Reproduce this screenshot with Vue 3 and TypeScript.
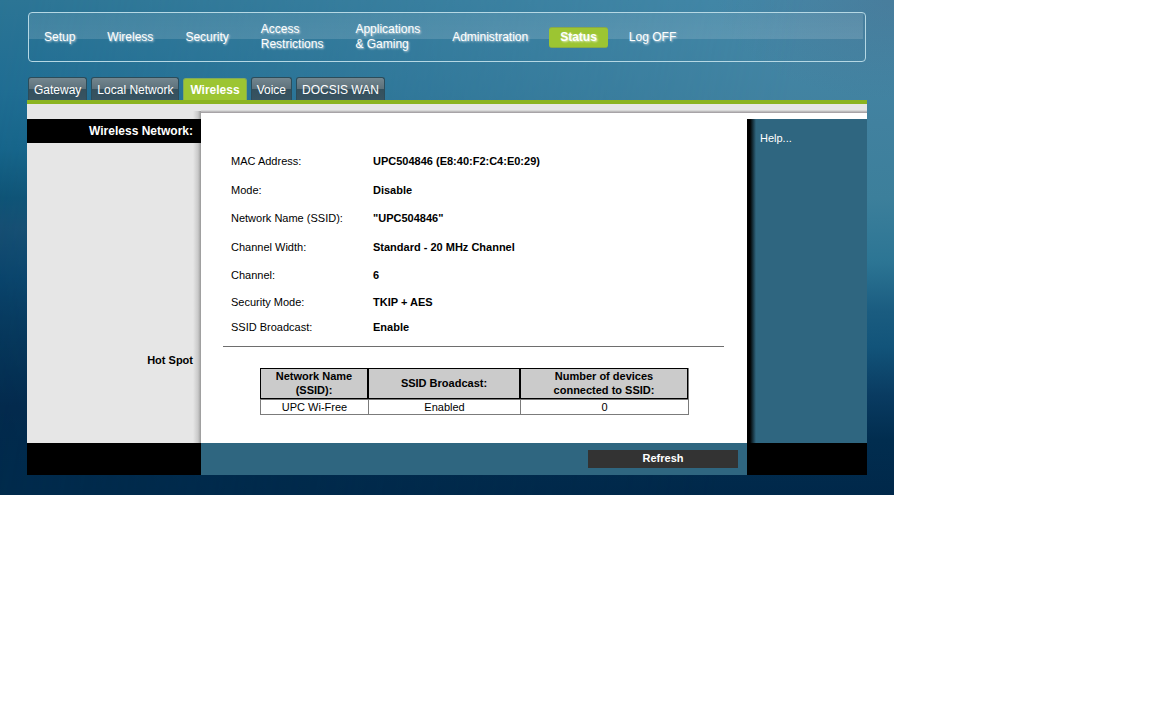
<script setup lang="ts">
import { ref } from 'vue'

interface Field {
  label: string
  value: string
  compact?: boolean
}

interface HotSpot {
  name: string
  broadcast: string
  devices: number
}

const menu: string[][] = [
  ['Setup'],
  ['Wireless'],
  ['Security'],
  ['Access', 'Restrictions'],
  ['Applications', '& Gaming'],
  ['Administration'],
  ['Status'],
  ['Log OFF'],
]
const activeMenu = ref('Status')

const tabs: string[] = ['Gateway', 'Local Network', 'Wireless', 'Voice', 'DOCSIS WAN']
const activeTab = ref('Wireless')

const fields: Field[] = [
  { label: 'MAC Address:', value: 'UPC504846 (E8:40:F2:C4:E0:29)' },
  { label: 'Mode:', value: 'Disable' },
  { label: 'Network Name (SSID):', value: '"UPC504846"' },
  { label: 'Channel Width:', value: 'Standard - 20 MHz Channel' },
  { label: 'Channel:', value: '6' },
  { label: 'Security Mode:', value: 'TKIP + AES', compact: true },
  { label: 'SSID Broadcast:', value: 'Enable', compact: true },
]

const hotSpots: HotSpot[] = [{ name: 'UPC Wi-Free', broadcast: 'Enabled', devices: 0 }]
</script>

<template>
  <div class="shell">
    <nav class="menu" aria-label="Main">
      <a
        v-for="lines in menu"
        :key="lines[0]"
        href="#"
        class="menu-item"
        :class="{ active: lines[0] === activeMenu }"
        @click.prevent="activeMenu = lines[0]"
      >
        <span v-for="line in lines" :key="line">{{ line }}</span>
      </a>
    </nav>

    <nav class="tabs" aria-label="Status pages">
      <a
        v-for="tab in tabs"
        :key="tab"
        href="#"
        class="tab"
        :class="{ active: tab === activeTab }"
        @click.prevent="activeTab = tab"
        >{{ tab }}</a
      >
    </nav>

    <div class="panel">
      <div class="strip-side"></div>
      <div class="strip-main"></div>

      <h2 class="side"><span class="side-title">Wireless Network:</span></h2>
      <main class="content">
        <dl class="fields">
          <div v-for="f in fields" :key="f.label" class="field" :class="{ compact: f.compact }">
            <dt>{{ f.label }}</dt>
            <dd>{{ f.value }}</dd>
          </div>
        </dl>
        <hr class="rule" />
      </main>

      <h2 class="side side-lower">Hot Spot</h2>
      <section class="content">
        <table class="spots">
          <colgroup>
            <col class="col-name" />
            <col class="col-broadcast" />
            <col class="col-devices" />
          </colgroup>
          <thead>
            <tr>
              <th scope="col">Network Name<br />(SSID):</th>
              <th scope="col">SSID Broadcast:</th>
              <th scope="col">Number of devices<br />connected to SSID:</th>
            </tr>
          </thead>
          <tbody>
            <tr v-for="s in hotSpots" :key="s.name">
              <td>{{ s.name }}</td>
              <td>{{ s.broadcast }}</td>
              <td>{{ s.devices }}</td>
            </tr>
          </tbody>
        </table>
      </section>

      <aside class="help"><a href="#">Help...</a></aside>

      <div class="foot-dark"></div>
      <footer class="foot">
        <button type="button" class="refresh">Refresh</button>
      </footer>
      <div class="foot-dark"></div>
    </div>
  </div>
</template>

<style>
body {
  background: #fff;
}
</style>

<style scoped>
.shell {
  position: relative;
  isolation: isolate;
  box-sizing: border-box;
  max-width: 894px;
  padding: 12px 27px 20px;
  font-family: 'Liberation Sans', Arial, sans-serif;
  font-size: 11px;
  color: #000;
  background: linear-gradient(
    #2c7595 0%,
    #1f6d93 18%,
    #15648a 30%,
    #0c5275 40%,
    #144c71 46%,
    #08426a 56%,
    #053559 68%,
    #03294c 82%,
    #002b4c 100%
  );
}

/* lighter sky towards the right edge */
.shell::before {
  content: '';
  position: absolute;
  inset: 0;
  z-index: -1;
  background:
    radial-gradient(ellipse 20% 20% at 100% 0, rgba(80, 105, 135, 0.35), transparent),
    linear-gradient(
      #4488a8 0%,
      #41819f 25%,
      #3c7f9b 40%,
      #2c7594 53%,
      #1a5c80 63%,
      #12547a 70%,
      #093b61 80%,
      #012d4f 89%,
      #00284a 100%
    );
  mask-image: linear-gradient(100deg, transparent 0%, #000 82%);
}

.menu {
  display: flex;
  align-items: center;
  gap: 32px;
  box-sizing: border-box;
  min-height: 50px;
  margin: 0 1px;
  padding: 0 15px;
  border: 1px solid #b5d8e4;
  border-radius: 4px;
  background: linear-gradient(
      to bottom,
      rgba(255, 255, 255, 0.1),
      rgba(255, 255, 255, 0.14)
    )
    no-repeat 0 0 / calc(100% - 2px) 26px;
}

.menu-item {
  display: flex;
  flex-direction: column;
  font-size: 12px;
  line-height: 15px;
  white-space: nowrap;
  color: #fff;
  text-decoration: none;
  text-shadow: 1px 1px 2px rgba(255, 255, 255, 0.7);
}

.menu-item.active {
  margin: 0 -11px;
  padding: 2px 11px;
  border: 1px solid #87a94a;
  border-width: 1px 0;
  border-radius: 3px;
  font-weight: bold;
  background: #9cc532;
}

.tabs {
  display: flex;
  align-items: flex-end;
  gap: 4px;
  margin: 15px 1px 0;
}

.tab {
  box-sizing: border-box;
  height: 23px;
  padding: 0 5px;
  border: 1px solid #2c4c5a;
  border-bottom: 0;
  border-radius: 3px 3px 0 0;
  font-size: 12px;
  line-height: 24px;
  white-space: nowrap;
  color: #fff;
  text-decoration: none;
  background: linear-gradient(#73868f 0, #5c707a 11px, #34505d 11px, #385462 100%);
}

.tab.active {
  height: 22px;
  padding: 0 6px;
  border-color: #84aa5a;
  line-height: 22px;
  font-weight: bold;
  background: #9cc532;
}

.panel {
  display: grid;
  grid-template-columns: 174px 1fr 120px;
  border-top: 4px solid #8bb421;
}

.strip-side {
  background:
    linear-gradient(to left, #989898, #c9c9c9 3px, #e6e6e6 8px) no-repeat 100% 100% / 8px 8px,
    #e6e6e6;
}

.strip-main {
  grid-column: 2 / 4;
  height: 15px;
  background: linear-gradient(#e6e6e6 6px, #c8c8c8 7px, #9d979c 9px, #fff 9px);
}

.side {
  grid-column: 1;
  margin: 0;
  font-size: 11px;
  line-height: 24px;
  text-align: right;
  background: linear-gradient(to left, #989898, #c9c9c9 3px, #e6e6e6 8px);
}

.side-title {
  display: block;
  padding-right: 8px;
  font-size: 12px;
  color: #fff;
  background: #000;
}

.side-lower {
  padding-right: 8px;
}

.content {
  grid-column: 2;
  background: #fff;
}

.fields {
  margin: 28px 30px 0;
}

.field {
  display: grid;
  grid-template-columns: 142px 1fr;
  line-height: 29px;
}

.field:nth-child(even) {
  line-height: 28px;
}

.field.compact {
  line-height: 25px;
}

dt,
dd {
  margin: 0;
}

dd {
  font-weight: bold;
}

.rule {
  height: 1px;
  margin: 6px 23px 1px 22px;
  border: 0;
  background: #6e6e6e;
}

.spots {
  width: calc(100% - 117px);
  margin: 20px 58px 28px 59px;
  border: 0 solid #7b7b7b;
  border-width: 0 1px 1px 0;
  border-spacing: 0;
  table-layout: fixed;
  line-height: 14px;
  text-align: center;
}

.col-name {
  width: 108px;
}

.col-broadcast {
  width: 152px;
}

.spots th {
  padding: 0 0 1px;
  border: 1px solid #000;
  background: #cbcbcb;
}

.spots td {
  padding: 0;
  border: 0 solid #7b7b7b;
  border-width: 1px 0 0 1px;
}

.help {
  grid-column: 3;
  grid-row: 2 / 4;
  padding: 12px 13px;
  line-height: 15px;
  background: linear-gradient(to right, #000 3px, #2f6680 9px);
}

.help a {
  color: #fff;
  text-decoration: none;
}

.foot-dark {
  background: #000;
}

.foot {
  display: flex;
  justify-content: flex-end;
  padding: 7px 9px;
  background: #2f6680;
}

.refresh {
  width: 150px;
  height: 18px;
  padding: 0 0 2px;
  border: 0;
  font: bold 11px 'Liberation Sans', Arial, sans-serif;
  color: #fff;
  background: #333;
}
</style>
